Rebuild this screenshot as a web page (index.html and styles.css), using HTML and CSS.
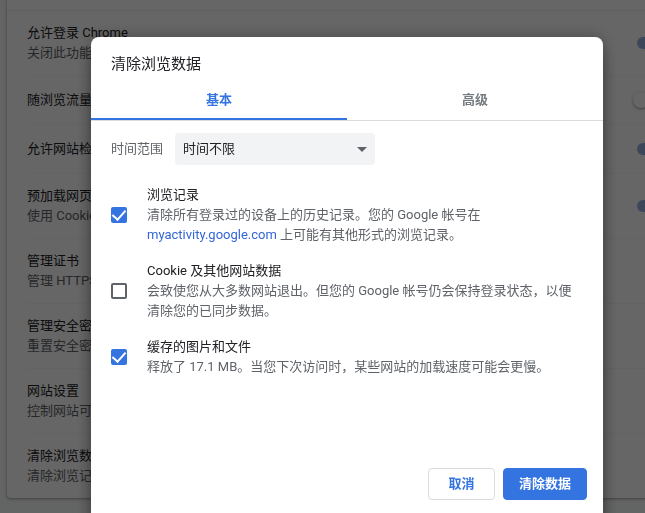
FILE: index.html
```html
<!DOCTYPE html>
<html lang="zh-CN">
<head>
    <meta charset="UTF-8">
    <meta name="viewport" content="width=device-width, initial-scale=1.0">
    <title>清除浏览数据</title>
    <link rel="stylesheet" href="styles.css">
</head>
<body>
    <main class="settings-card">
        <div class="row">
            <div class="row-text">
                <div class="row-title">允许登录 Chrome</div>
                <div class="row-sub">关闭此功能</div>
            </div>
            <input type="checkbox" class="toggle" aria-label="允许登录 Chrome" checked>
        </div>
        <div class="row single">
            <div class="row-title">随浏览流量</div>
            <input type="checkbox" class="toggle" aria-label="随浏览流量">
        </div>
        <div class="row single">
            <div class="row-title">允许网站检</div>
            <input type="checkbox" class="toggle" aria-label="允许网站检" checked>
        </div>
        <div class="row">
            <div class="row-text">
                <div class="row-title">预加载网页</div>
                <div class="row-sub">使用 Cookie</div>
            </div>
            <input type="checkbox" class="toggle" aria-label="预加载网页" checked>
        </div>
        <div class="row">
            <div class="row-text">
                <div class="row-title">管理证书</div>
                <div class="row-sub">管理 HTTPS</div>
            </div>
        </div>
        <div class="row">
            <div class="row-text">
                <div class="row-title">管理安全密</div>
                <div class="row-sub">重置安全密</div>
            </div>
        </div>
        <div class="row">
            <div class="row-text">
                <div class="row-title">网站设置</div>
                <div class="row-sub">控制网站可</div>
            </div>
        </div>
        <div class="row">
            <div class="row-text">
                <div class="row-title">清除浏览数</div>
                <div class="row-sub">清除浏览记</div>
            </div>
        </div>
    </main>

    <div class="overlay">
        <div class="dialog" role="dialog" aria-labelledby="dialogTitle">
            <h1 class="dialog-title" id="dialogTitle">清除浏览数据</h1>
            <div class="tabs" role="tablist">
                <button class="tab selected" role="tab" aria-selected="true">基本</button>
                <button class="tab" role="tab" aria-selected="false">高级</button>
            </div>
            <div class="dialog-body">
                <div class="time-range">
                    <label for="timeRange">时间范围</label>
                    <div class="select-wrap">
                        <select id="timeRange">
                            <option>时间不限</option>
                        </select>
                        <svg class="arrow" viewBox="0 0 10 5" aria-hidden="true"><path d="M0 0h10L5 5z"/></svg>
                    </div>
                </div>
                <div class="option">
                    <input type="checkbox" class="check" id="history" checked>
                    <div class="option-text">
                        <label for="history">浏览记录</label>
                        <p>清除所有登录过的设备上的历史记录。您的 Google 帐号在 <a href="#">myactivity.google.com</a> 上可能有其他形式的浏览记录。</p>
                    </div>
                </div>
                <div class="option">
                    <input type="checkbox" class="check" id="cookies">
                    <div class="option-text">
                        <label for="cookies">Cookie 及其他网站数据</label>
                        <p>会致使您从大多数网站退出。但您的 Google 帐号仍会保持登录状态，以便清除您的已同步数据。</p>
                    </div>
                </div>
                <div class="option">
                    <input type="checkbox" class="check" id="cache" checked>
                    <div class="option-text">
                        <label for="cache">缓存的图片和文件</label>
                        <p>释放了 17.1 MB。当您下次访问时，某些网站的加载速度可能会更慢。</p>
                    </div>
                </div>
            </div>
            <div class="dialog-footer">
                <button class="btn">取消</button>
                <button class="btn primary">清除数据</button>
            </div>
        </div>
    </div>
</body>
</html>
```

FILE: styles.css
```css
* {
    box-sizing: border-box;
}
html, body {
    margin: 0;
    height: 100%;
    overflow: hidden;
}
body, button, select {
    font-family: Roboto, "Noto Sans CJK SC", sans-serif;
    font-size: 13px;
    line-height: 20px;
}
body {
    background-color: #f8f9fa;
    color: #202124;
}

/* settings page behind the dialog */
.settings-card {
    width: 110%;
    margin-left: 7px;
    padding-top: 10px;
    background: white;
    border-radius: 0 0 4px 4px;
    box-shadow: 0 1px 2px rgba(60, 64, 67, 0.3), 0 1px 3px 1px rgba(60, 64, 67, 0.15);
}
.row {
    display: flex;
    align-items: center;
    justify-content: space-between;
    height: 65px;
    margin-left: 20px;
    padding-right: 52px;
    border-top: 1px solid #f8f8f8;
}
.row.single {
    height: 49px;
}
.row:first-child {
    margin-left: 0;
    padding-left: 20px;
    border-top-color: #f0f0f0;
}
.row-sub {
    color: #5f6368;
}
.toggle {
    appearance: none;
    display: flex;
    align-items: center;
    width: 28px;
    height: 12px;
    margin: 0;
    border-radius: 6px;
    background: #bdc1c6;
}
.toggle:checked {
    background: #98b2e0;
}
.toggle::before {
    content: "";
    width: 16px;
    height: 16px;
    flex-shrink: 0;
    margin-left: -4px;
    border-radius: 50%;
    background: white;
    box-shadow: 0 1px 3px rgba(0, 0, 0, 0.4);
}
.toggle:checked::before {
    margin-left: 16px;
    background: #1a73e8;
}

/* dialog */
.overlay {
    position: fixed;
    inset: 0;
    display: flex;
    justify-content: center;
    align-items: flex-start;
    padding: 37px 40px 0 89px;
    background: rgba(0, 0, 0, 0.6);
}
.dialog {
    flex: 0 1 512px;
    background: white;
    border-radius: 8px;
    box-shadow: 0 0 16px rgba(0, 0, 0, 0.3), 0 16px 16px rgba(0, 0, 0, 0.24);
}
.dialog-title {
    margin: 0;
    padding: 17px 20px 6px;
    font-size: 15px;
    font-weight: 400;
    line-height: 20px;
}
.tabs {
    display: flex;
    border-bottom: 1px solid #dadce0;
}
.tab {
    flex: 1;
    height: 40px;
    padding: 2px 0 0;
    border: 0;
    border-bottom: 2px solid transparent;
    background: none;
    color: #757a7f;
    font-weight: 600;
}
.tab.selected {
    color: #3374e0;
    border-bottom-color: #3374e0;
}
.dialog-body {
    display: flex;
    flex-direction: column;
    gap: 16px;
    min-height: 347px;
    padding: 12px 20px;
}
.time-range {
    display: flex;
    align-items: center;
    gap: 12px;
    margin-bottom: 4px;
    color: #5f6368;
}
.select-wrap {
    position: relative;
    width: 200px;
}
.select-wrap select {
    appearance: none;
    display: block;
    width: 100%;
    height: 32px;
    padding: 0 24px 0 8px;
    border: 0;
    border-radius: 4px;
    background: #f1f3f4;
    color: #202124;
}
.arrow {
    position: absolute;
    top: 14px;
    right: 8px;
    width: 10px;
    height: 5px;
    fill: #5f6368;
    pointer-events: none;
}
.option {
    display: flex;
    align-items: center;
    gap: 20px;
}
.check {
    appearance: none;
    flex-shrink: 0;
    width: 16px;
    height: 16px;
    margin: 0;
    border: 2px solid #5f6368;
    border-radius: 2px;
}
.check:checked {
    display: flex;
    align-items: flex-start;
    justify-content: center;
    border-color: #3374e0;
    background: #3374e0;
}
.check:checked::before {
    content: "";
    width: 6px;
    height: 11px;
    border: solid white;
    border-width: 0 2px 2px 0;
    transform: translateY(-2px) rotate(42deg);
}
.option-text label {
    display: block;
}
.option-text p {
    margin: 0;
    color: #5f6368;
}
.option-text a {
    color: #3367d6;
    text-decoration: none;
}
.dialog-footer {
    display: flex;
    justify-content: flex-end;
    gap: 8px;
    padding: 0 16px 24px;
}
.btn {
    height: 32px;
    padding: 0 16px;
    min-width: 67px;
    border: 1px solid #dadce0;
    border-radius: 4px;
    background: white;
    color: #3374e0;
    font-weight: 700;
}
.btn.primary {
    min-width: 84px;
    padding: 0 15px;
    border-color: #3374e0;
    background: #3374e0;
    color: white;
}
```
